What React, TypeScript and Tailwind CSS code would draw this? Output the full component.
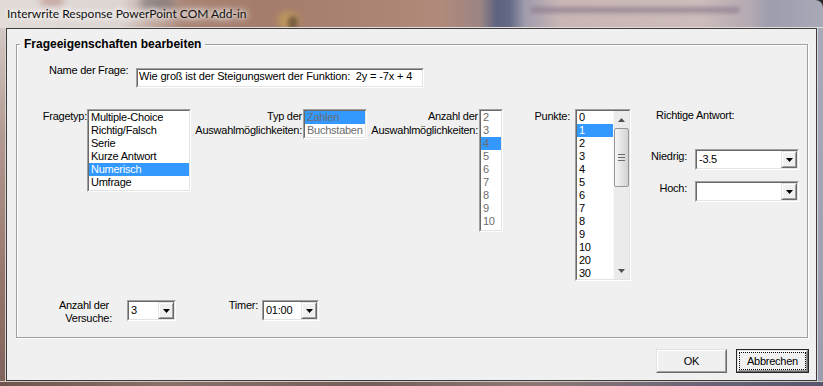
import React from "react";

type Kids = { children?: React.ReactNode; className?: string };

function Sunken({ className = "", inner = "", children }: Kids & { inner?: string }) {
  return (
    <div className={"border border-t-[#a0a0a0] border-l-[#a0a0a0] border-r-white border-b-white " + className}>
      <div className={"w-full h-full border border-t-[#696969] border-l-[#696969] border-r-[#e3e3e3] border-b-[#e3e3e3] bg-white overflow-hidden " + inner}>
        {children}
      </div>
    </div>
  );
}

function Raised({ className = "", children }: Kids) {
  return (
    <div className={"border border-t-[#e3e3e3] border-l-[#e3e3e3] border-r-[#696969] border-b-[#696969] " + className}>
      <div className="w-full h-full border border-t-white border-l-white border-r-[#a0a0a0] border-b-[#a0a0a0] bg-[#f0f0f0] flex items-center justify-center">
        {children}
      </div>
    </div>
  );
}

function DownArrow({ color = "#000" }: { color?: string }) {
  return (
    <svg width="7" height="4" viewBox="0 0 7 4" className="block">
      <polygon points="0,0 7,0 3.5,4" fill={color} />
    </svg>
  );
}

function UpArrow({ color = "#000" }: { color?: string }) {
  return (
    <svg width="7" height="4" viewBox="0 0 7 4" className="block">
      <polygon points="0,4 7,4 3.5,0" fill={color} />
    </svg>
  );
}

function Combo({ value, className }: { value: string; className: string }) {
  return (
    <Sunken className={className + " h-[21px]"} inner="flex">
      <div className="flex-1 pl-[2px] leading-[17px] whitespace-nowrap">{value}</div>
      <Raised className="w-[16px] h-full">
        <DownArrow />
      </Raised>
    </Sunken>
  );
}

function Items({ items, selected, disabled }: { items: string[]; selected: number; disabled?: boolean }) {
  return (
    <div className="flex flex-col">
      {items.map((it, i) => (
        <div
          key={i}
          className={
            "h-[13px] leading-[13px] pl-[2px] whitespace-nowrap " +
            (i === selected ? "bg-[#3399ff] " : "") +
            (disabled ? "text-[#6d6d6d]" : i === selected ? "text-white" : "text-black")
          }
        >
          {it}
        </div>
      ))}
    </div>
  );
}

function TitleBar() {
  return (
    <div className="relative h-[28px] flex items-center pl-[7px] border-b border-b-[#e4dcda] overflow-hidden [background-image:linear-gradient(to_right,#e2dbd8_0px,#ddd5d2_120px,#c4aea5_150px,#a98575_185px,#a47c6b_260px,#a98271_350px,#b08a7a_440px,#9c8584_480px,#5d6280_497px,#646a86_510px,#a09cac_525px,#c9b6b5_560px,#cdbcbb_700px,#b4aab2_750px,#9c9dad_770px,#a9aab8_823px)]">
      <div className="absolute left-[40px] top-[-4px] w-[24px] h-[10px] rounded-full bg-[#b07a74] opacity-50 blur-[3px]" />
      <div className="absolute left-[140px] top-[-4px] w-[34px] h-[14px] rounded-full bg-[#6c6a72] opacity-60 blur-[4px]" />
      <div className="absolute left-[278px] top-[12px] w-[22px] h-[18px] rounded-full bg-[#c9a256] opacity-70 blur-[3px]" />
      <div className="absolute left-[288px] top-[16px] w-[10px] h-[14px] rounded-full bg-[#4e3f35] opacity-60 blur-[2px]" />
      <div className="absolute left-[530px] top-[7px] w-[210px] h-[6px] rounded-full bg-[#8a7a8c] opacity-70 blur-[2px]" />
      <span
        className="relative text-[12px] leading-[14px] text-[#101010] whitespace-nowrap [text-shadow:0_0_8px_#fff,0_0_8px_#fff,0_0_4px_#fff]"
        style={{ fontFamily: 'Lato, "Noto Sans", sans-serif' }}
      >
        Interwrite Response PowerPoint COM Add-in
      </span>
    </div>
  );
}

export default function App() {
  const font = { fontFamily: '"Liberation Sans", Arial, sans-serif' };
  return (
    <div className="w-[823px] h-[386px] bg-[#2b2b2b] overflow-hidden">
      <div className="w-full h-full flex flex-col rounded-tr-[8px] overflow-hidden">
        <TitleBar />
        <div className="flex h-[353px]">
          <div className="w-[6px] h-full border-r border-r-[#d9d1ce] bg-[linear-gradient(to_bottom,#d3c9c5,#b39a91_30%,#97776d_70%,#80635b)]" />
          <div
            className="w-[811px] h-[353px] border border-[#3c3c3c] bg-[#f0f0f0] flex flex-col text-[11px] leading-[13px] tracking-[-0.25px] text-black"
            style={font}
          >
            {/* Group box */}
            <div className="relative ml-[9px] mt-[15px] w-[792px] h-[294px] border border-[#a0a0a0] shadow-[inset_1px_1px_0_#fff,1px_1px_0_#fff] flex flex-col">
              <span className="absolute left-[3px] top-[-8px] px-[4px] bg-[#f0f0f0] text-[12px] font-bold leading-[14px] tracking-normal whitespace-nowrap">
                Frageeigenschaften bearbeiten
              </span>

              {/* Row 1 */}
              <div className="flex items-start mt-[19px] ml-[32px]">
                <div className="w-[87px] whitespace-nowrap">Name der Frage:</div>
                <Sunken className="w-[288px] h-[20px] mt-[4px]" inner="px-[1px]">
                  <div className="leading-[10px] pt-[1px] tracking-[-0.15px] whitespace-nowrap">
                    Wie groß ist der Steigungswert der Funktion:&nbsp; 2y = -7x + 4
                  </div>
                </Sunken>
              </div>

              {/* Row 2 */}
              <div className="flex items-start mt-[21px]">
                <div className="w-[70px] mt-[1px] text-right whitespace-nowrap">Fragetyp:</div>
                <Sunken className="w-[104px] h-[83px]">
                  <Items
                    items={["Multiple-Choice", "Richtig/Falsch", "Serie", "Kurze Antwort", "Numerisch", "Umfrage"]}
                    selected={4}
                  />
                </Sunken>

                <div className="w-[112px] pr-[1px] text-right leading-[14px] whitespace-nowrap">
                  <div>Typ der</div>
                  <div>Auswahlmöglichkeiten:</div>
                </div>
                <Sunken className="w-[64px] h-[30px]">
                  <Items items={["Zahlen", "Buchstaben"]} selected={0} disabled />
                </Sunken>

                <div className="w-[112px] pr-[1px] text-right leading-[14px] whitespace-nowrap">
                  <div>Anzahl der</div>
                  <div>Auswahlmöglichkeiten:</div>
                </div>
                <Sunken className="w-[24px] h-[123px]">
                  <Items items={["2", "3", "4", "5", "6", "7", "8", "9", "10"]} selected={2} disabled />
                </Sunken>

                <div className="w-[72px] pr-[5px] mt-[1px] text-right whitespace-nowrap">Punkte:</div>
                <Sunken className="w-[56px] h-[172px]" inner="flex">
                  <div className="flex-1">
                    <Items
                      items={["0", "1", "2", "3", "4", "5", "6", "7", "8", "9", "10", "20", "30"]}
                      selected={1}
                    />
                  </div>
                  <div className="w-[16px] h-full flex flex-col bg-[#ebebeb] border-l border-l-[#f7f7f7]">
                    <div className="h-[17px] flex items-center justify-center">
                      <UpArrow color="#505050" />
                    </div>
                    <div className="h-[59px] rounded-[2px] border border-[#979797] bg-[linear-gradient(to_right,#f6f6f6,#e4e4e4_50%,#d2d2d2)] flex flex-col items-center justify-center gap-[2px]">
                      <div className="w-[7px] h-[1px] bg-[#6a6a6a]" />
                      <div className="w-[7px] h-[1px] bg-[#6a6a6a]" />
                      <div className="w-[7px] h-[1px] bg-[#6a6a6a]" />
                    </div>
                    <div className="flex-1" />
                    <div className="h-[17px] flex items-center justify-center">
                      <DownArrow color="#505050" />
                    </div>
                  </div>
                </Sunken>

                <div className="flex flex-col">
                  <div className="ml-[25px] whitespace-nowrap">Richtige Antwort:</div>
                  <div className="flex items-start mt-[27px]">
                    <div className="w-[56px] mt-[1px] text-right whitespace-nowrap">Niedrig:</div>
                    <Combo value="-3.5" className="ml-[8px] w-[104px]" />
                  </div>
                  <div className="flex items-start mt-[11px]">
                    <div className="w-[56px] mt-[1px] text-right whitespace-nowrap">Hoch:</div>
                    <Combo value="" className="ml-[8px] w-[104px]" />
                  </div>
                </div>
              </div>

              {/* Row 3 */}
              <div className="flex items-start mt-[19px]">
                <div className="w-[95px] -mt-[1px] text-right whitespace-nowrap">
                  <div className="pr-[3px]">Anzahl der</div>
                  <div>Versuche:</div>
                </div>
                <Combo value="3" className="ml-[15px] w-[49px]" />
                <div className="w-[86px] pr-[4px] -mt-[1px] text-right whitespace-nowrap">Timer:</div>
                <Combo value="01:00" className="w-[57px]" />
              </div>
            </div>

            {/* Buttons */}
            <div className="flex justify-end gap-[9px] mt-[11px] pr-[7px]">
              <Raised className="w-[71px] h-[24px]">
                <span>OK</span>
              </Raised>
              <div className="w-[73px] h-[24px] border border-[#262626]">
                <Raised className="w-full h-full">
                  <div className="w-full h-full border border-dotted border-black flex items-center justify-center">
                    Abbrechen
                  </div>
                </Raised>
              </div>
            </div>
          </div>
          <div className="w-[6px] h-full border-l border-l-[#d6d6de] bg-[linear-gradient(to_bottom,#a8a9b8,#9c9dac)]" />
        </div>
        <div className="h-[5px] border-t border-t-[#cfc6c2] bg-[linear-gradient(to_right,#6f554e,#8b706a_20%,#745f5a_45%,#8e7874_65%,#6a6478_85%,#55566e)]" />
      </div>
    </div>
  );
}
